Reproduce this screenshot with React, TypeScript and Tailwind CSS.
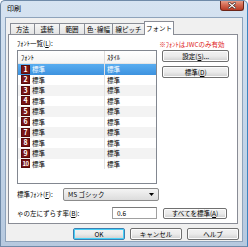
import React from 'react';

const rows = [1, 2, 3, 4, 5, 6, 7, 8, 9, 10];

function VistaButton({ label, className = '' }: { label: React.ReactNode; className?: string }) {
  return (
    <div
      className={
        'flex items-center justify-center rounded-[2px] border border-[#707070] bg-gradient-to-b from-[#f2f2f2] via-[#ebebeb] to-[#cfcfcf] shadow-[inset_0_0_0_1px_#fcfcfc] ' +
        className
      }
    >
      {label}
    </div>
  );
}

function FontIcon({ n }: { n: number }) {
  return (
    <div className="w-[9px] h-[9px] shrink-0 bg-[#7a1414] border border-[#5a0c0c] flex items-center justify-center text-white font-bold leading-none">
      <span className={n === 10 ? 'text-[6px] tracking-[-0.6px]' : 'text-[7px]'}>{n}</span>
    </div>
  );
}

export default function App() {
  return (
    <div className="w-[248px] h-[247px] overflow-hidden flex flex-col rounded-t-[5px] border border-[#6f8aa8] border-r-[#3d84bf] bg-gradient-to-b from-[#d6e3f1] via-[#c5d6e9] to-[#b6c9df] font-['Noto_Sans_CJK_JP',sans-serif] text-[6.5px] leading-none text-black">
      {/* title bar */}
      <div className="h-[16px] flex items-start justify-between pl-[6px] pr-[3px]">
        <span className="mt-[4px] text-[7px]">印刷</span>
        <div className="w-[24px] h-[11px] -mt-px rounded-b-[3px] border border-t-0 border-[#6b2519] bg-gradient-to-b from-[#e9a995] via-[#d46a52] to-[#b83a24] flex items-center justify-center">
          <svg width="8" height="7" viewBox="0 0 8 7">
            <path d="M1 1 L7 6 M7 1 L1 6" stroke="#3a1a14" strokeWidth="2.4" strokeLinecap="square" />
            <path d="M1 1 L7 6 M7 1 L1 6" stroke="#ffffff" strokeWidth="1.2" strokeLinecap="square" />
          </svg>
        </div>
      </div>

      {/* client area */}
      <div className="flex-1 mx-[4px] mb-[4px] border border-[#8ea3bb] bg-[#f0f0f0] flex flex-col pl-[2px] pt-[2px]">
        {/* tabs */}
        <div className="h-[14px] flex items-end pl-[2px] relative z-10">
          {['方法', '連続', '範囲', '色·線幅', '線ピッチ'].map((t, i) => (
            <div
              key={t}
              className={
                'h-[11px] border border-b-0 border-[#898c95] bg-gradient-to-b from-[#f6f6f6] to-[#e3e3e3] flex items-center justify-center ' +
                (i === 0 ? 'w-[25px]' : i === 3 ? 'w-[29px] -ml-px' : i === 4 ? 'w-[33px] -ml-px' : 'w-[26px] -ml-px')
              }
            >
              {t}
            </div>
          ))}
          <div className="w-[30px] h-[14px] -ml-px -mb-px border border-b-0 border-[#898c95] bg-white flex items-center justify-center">
            フォント
          </div>
        </div>

        {/* tab panel */}
        <div className="w-[230px] h-[190px] border border-[#898c95] bg-white flex flex-col px-[8px] pt-[5px]">
          <div className="flex gap-[5px]">
            {/* list column */}
            <div className="w-[141px] flex flex-col">
              <div className="h-[10px]">ﾌｫﾝﾄ一覧(<span className="underline">L</span>):</div>
              <div className="h-[134px] border border-[#828790] bg-white flex flex-col">
                <div className="h-[13px] flex border-b border-[#e5e5e5] bg-gradient-to-b from-white to-[#f4f4f4] items-center">
                  <div className="w-[87px] pl-[3px] border-r border-[#dcdcdc] h-full flex items-center">ﾌｫﾝﾄ</div>
                  <div className="pl-[2px]">ｽﾀｲﾙ</div>
                </div>
                {rows.map((n) => {
                  const sel = n === 1;
                  const alt = n % 2 === 1 && !sel;
                  return (
                    <div
                      key={n}
                      className={
                        'h-[10.5px] flex items-center ' +
                        (sel
                          ? 'bg-gradient-to-b from-[#59adf0] to-[#3d92df] text-white'
                          : alt
                          ? 'bg-[#f3f3f3]'
                          : 'bg-white')
                      }
                    >
                      <div className="w-[87px] h-full flex items-center gap-[2px] pl-[3px] border-r border-[#e3e3e3]">
                        <FontIcon n={n} />
                        <span>標準</span>
                      </div>
                      <div className="pl-[2px]">標準</div>
                    </div>
                  );
                })}
              </div>
            </div>

            {/* right column */}
            <div className="w-[67px] flex flex-col pt-[1px]">
              <div className="h-[9px] text-[#e0241c] whitespace-nowrap -ml-[3px]">※ﾌｫﾝﾄはJWCのみ有効</div>
              <VistaButton className="h-[12px]" label={<span>設定(<span className="underline">S</span>)...</span>} />
              <VistaButton className="h-[12px] mt-[4px]" label={<span>標準(<span className="underline">D</span>)</span>} />
            </div>
          </div>

          {/* standard font */}
          <div className="mt-[4px] h-[13px] flex items-center">
            <div className="w-[46px]">標準ﾌｫﾝﾄ(<span className="underline">F</span>):</div>
            <div className="w-[96px] h-[13px] rounded-[2px] border border-[#8b8b8b] bg-gradient-to-b from-[#f4f4f4] to-[#dcdcdc] flex items-center justify-between pl-[4px] pr-[4px]">
              <span>MS ゴシック</span>
              <svg width="5" height="3" viewBox="0 0 5 3">
                <path d="M0 0 H5 L2.5 3 Z" fill="#000" />
              </svg>
            </div>
          </div>

          {/* shift rate */}
          <div className="mt-[6px] h-[12px] flex items-center">
            <div className="w-[95px]">ゃの左にずらす率(<span className="underline">B</span>):</div>
            <div className="w-[45px] h-[12px] border border-[#a0a0a0] border-t-[#7a7a7a] bg-white flex items-center pl-[4px]">0.6</div>
            <VistaButton className="ml-[6px] w-[64px] h-[11px]" label={<span>すべてを標準(<span className="underline">A</span>)</span>} />
          </div>
        </div>

        {/* dialog buttons */}
        <div className="mt-[4px] flex justify-end gap-[5px] pr-[3px]">
          <VistaButton
            className="w-[52px] h-[12px] !border-[#3c7fb1] !shadow-[inset_0_0_0_1px_#48d0f7]"
            label="OK"
          />
          <VistaButton className="w-[52px] h-[12px]" label="キャンセル" />
          <VistaButton className="w-[52px] h-[12px]" label="ヘルプ" />
        </div>
      </div>
    </div>
  );
}
